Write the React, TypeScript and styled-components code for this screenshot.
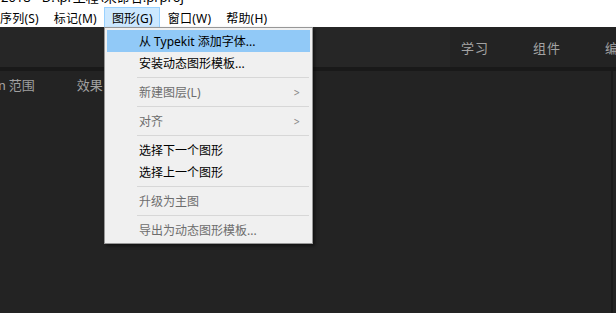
import React from "react";
import styled, { createGlobalStyle } from "styled-components";

const GlobalStyle = createGlobalStyle`
  html, body { margin: 0; padding: 0; background: #232323; }
  body { font-family: "Noto Sans", "Noto Sans CJK SC", sans-serif; }
  #root { width: 616px; height: 313px; overflow: hidden; }
`;

const Page = styled.div`
  position: relative;
  width: 616px;
  height: 313px;
  display: flex;
  flex-direction: column;
  overflow: hidden;
`;

const TitleBar = styled.div`
  height: 5px;
  background: #ffffff;
  overflow: hidden;
`;

const TitleText = styled.div`
  margin-top: -11px;
  padding-left: 1px;
  font-size: 13px;
  line-height: 16px;
  color: #000;
  white-space: nowrap;
`;

const MenuBar = styled.div`
  height: 22px;
  background: #ffffff;
  display: flex;
  align-items: stretch;
`;

const MenuItem = styled.div<{ $active?: boolean }>`
  display: flex;
  align-items: center;
  padding: 0 6px 0 7px;
  margin-top: 2px;
  font-family: "Noto Sans", "Noto Sans CJK SC", sans-serif;
  font-size: 12px;
  letter-spacing: 0.2px;
  color: #000;
  white-space: nowrap;
  border: 1px solid ${(p) => (p.$active ? "#99d1ff" : "transparent")};
  border-bottom: none;
  background: ${(p) => (p.$active ? "#cce8ff" : "transparent")};
  &:first-child { padding-left: 0; margin-left: -1px; }
`;

const Workspace = styled.div`
  flex: 1;
  display: flex;
  flex-direction: column;
  background: #232323;
`;

const Toolbar = styled.div`
  height: 40px;
  display: flex;
  background: #262626;
`;

const ToolSpacer = styled.div`
  width: 450px;
  flex-shrink: 0;
`;

const WorkspaceTabs = styled.div`
  flex: 1;
  min-width: 0;
  overflow: hidden;
  display: flex;
  align-items: center;
  background: #232323;
  padding-left: 11px;
  gap: 44px;
`;

const WorkspaceTab = styled.span`
  font-family: "Noto Sans CJK SC", sans-serif;
  font-size: 13px;
  color: #a3a3a3;
  letter-spacing: 1px;
  white-space: nowrap;
`;

const Divider = styled.div`
  height: 4px;
  background: #191919;
`;

const PanelRow = styled.div`
  flex: 1;
  display: flex;
`;

const Panel = styled.div`
  width: 611px;
  background: #232323;
  border-right: 2px solid #1a1a1a;
`;

const PanelHeader = styled.div`
  height: 26px;
  display: flex;
  align-items: center;
`;

const PanelTab = styled.span<{ $offset: number }>`
  margin-left: ${(p) => p.$offset}px;
  font-family: "Noto Sans CJK SC", sans-serif;
  font-size: 13px;
  color: #a0a0a0;
  white-space: nowrap;
`;

const Dropdown = styled.div`
  position: absolute;
  left: 104px;
  top: 27px;
  width: 203px;
  padding: 2px;
  background: #f0f0f0;
  border: 1px solid #979797;
  box-shadow: 2px 2px 3px rgba(0, 0, 0, 0.45);
  display: flex;
  flex-direction: column;
`;

const DropItem = styled.div<{ $highlight?: boolean; $disabled?: boolean }>`
  height: 22px;
  display: flex;
  align-items: center;
  padding-left: 32px;
  padding-right: 9px;
  font-family: "Noto Sans", "Noto Sans CJK SC", sans-serif;
  font-size: 12px;
  color: ${(p) => (p.$disabled ? "#6d6d6d" : "#000000")};
  background: ${(p) => (p.$highlight ? "#91c9f7" : "transparent")};
  white-space: nowrap;
`;

const Label = styled.span`
  flex: 1;
`;

const Arrow = styled.span`
  font-family: "DejaVu Sans", sans-serif;
  font-size: 11px;
  color: #8a8a8a;
  transform: scaleX(0.7);
`;

const Separator = styled.div`
  height: 1px;
  margin: 3px 1px 3px 30px;
  background: #d7d7d7;
`;

export default function App() {
  return (
    <Page>
      <GlobalStyle />
      <TitleBar>
        <TitleText>2018 - D:\pr工程\未命名.prproj</TitleText>
      </TitleBar>
      <MenuBar>
        <MenuItem>序列(S)</MenuItem>
        <MenuItem>标记(M)</MenuItem>
        <MenuItem $active>图形(G)</MenuItem>
        <MenuItem>窗口(W)</MenuItem>
        <MenuItem>帮助(H)</MenuItem>
      </MenuBar>
      <Workspace>
        <Toolbar>
          <ToolSpacer />
          <WorkspaceTabs>
            <WorkspaceTab>学习</WorkspaceTab>
            <WorkspaceTab>组件</WorkspaceTab>
            <WorkspaceTab>编辑</WorkspaceTab>
          </WorkspaceTabs>
        </Toolbar>
        <Divider />
        <PanelRow>
          <Panel>
            <PanelHeader>
              <PanelTab $offset={-2}>n 范围</PanelTab>
              <PanelTab $offset={42}>效果</PanelTab>
            </PanelHeader>
          </Panel>
        </PanelRow>
      </Workspace>
      <Dropdown>
        <DropItem $highlight>
          <Label>从 Typekit 添加字体...</Label>
        </DropItem>
        <DropItem>
          <Label>安装动态图形模板...</Label>
        </DropItem>
        <Separator />
        <DropItem $disabled>
          <Label>新建图层(L)</Label>
          <Arrow>&gt;</Arrow>
        </DropItem>
        <Separator />
        <DropItem $disabled>
          <Label>对齐</Label>
          <Arrow>&gt;</Arrow>
        </DropItem>
        <Separator />
        <DropItem>
          <Label>选择下一个图形</Label>
        </DropItem>
        <DropItem>
          <Label>选择上一个图形</Label>
        </DropItem>
        <Separator />
        <DropItem $disabled>
          <Label>升级为主图</Label>
        </DropItem>
        <Separator />
        <DropItem $disabled>
          <Label>导出为动态图形模板...</Label>
        </DropItem>
      </Dropdown>
    </Page>
  );
}
